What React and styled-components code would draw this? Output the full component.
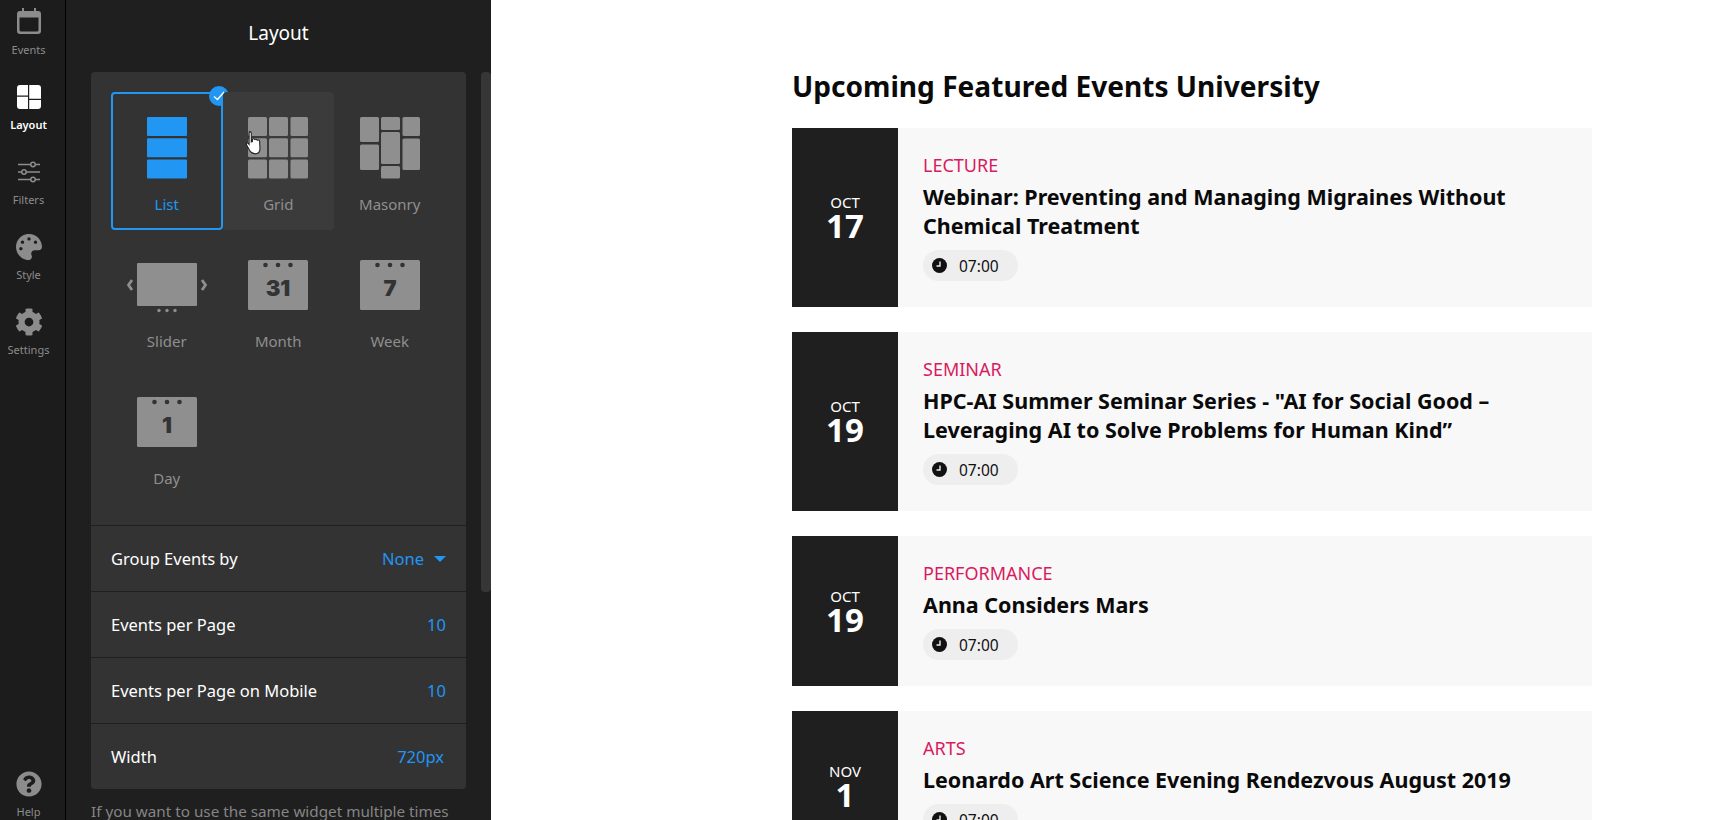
import React from "react";
import styled, { createGlobalStyle } from "styled-components";
import { FaCog, FaPalette, FaQuestionCircle } from "react-icons/fa";

const GlobalStyle = createGlobalStyle`
  html, body {
    margin: 0;
    height: 100%;
    overflow: hidden;
    background: #fff;
    font-family: "Noto Sans", "Open Sans", "Liberation Sans", sans-serif;
  }
  * { box-sizing: border-box; }
`;

const Page = styled.div`
  display: flex;
  width: 1718px;
  height: 820px;
  overflow: hidden;
`;

const Rail = styled.nav`
  width: 66px;
  height: 100%;
  flex-shrink: 0;
  display: flex;
  flex-direction: column;
  padding-right: 8px;
  background: #1c1c1c;
  border-right: 1px solid #000;
`;

const RailItem = styled.div`
  height: 75px;
  flex-shrink: 0;
  display: flex;
  flex-direction: column;
  align-items: center;
  padding-top: 9px;
  color: ${({ $active }) => ($active ? "#fff" : "#8c8c8c")};
  margin-top: ${({ $bottom }) => ($bottom ? "auto" : "0")};
  margin-bottom: ${({ $bottom }) => ($bottom ? "-17px" : "0")};
`;

const RailIcon = styled.div`
  height: 26px;
  display: flex;
  align-items: center;
  justify-content: center;
`;

const RailLabel = styled.span`
  margin-top: 6px;
  font-size: 11px;
  line-height: 18px;
  font-weight: ${({ $active }) => ($active ? 600 : 400)};
`;

const Panel = styled.aside`
  width: 425px;
  height: 100%;
  flex-shrink: 0;
  display: flex;
  flex-direction: column;
  background: #1f1f1f;
  position: relative;
  overflow: hidden;
`;

const PanelTitle = styled.h2`
  margin: 0;
  height: 72px;
  flex-shrink: 0;
  padding-top: 19px;
  font-size: 19px;
  line-height: 28px;
  font-weight: 400;
  color: #fff;
  text-align: center;
`;

const Card = styled.div`
  width: 375px;
  margin-left: 25px;
  flex-shrink: 0;
  border-radius: 4px;
  background: #333;
`;

const TileGrid = styled.div`
  display: grid;
  grid-template-columns: repeat(3, 111.5px);
  grid-auto-rows: 137px;
  padding: 20px 20px 22px;
`;

const Tile = styled.div`
  position: relative;
  height: 138px;
  display: flex;
  flex-direction: column;
  align-items: center;
  border-radius: 4px;
  border: 2px solid ${({ $selected }) => ($selected ? "#2196f3" : "transparent")};
  background: ${({ $hovered }) => ($hovered ? "#3b3b3b" : "transparent")};
  color: ${({ $selected }) => ($selected ? "#2196f3" : "#8f8f8f")};
`;

const TileIcon = styled.svg`
  display: block;
  flex-shrink: 0;
  margin-top: ${({ $top }) => $top}px;
  margin-bottom: ${({ $gap }) => $gap}px;
`;

const TileLabel = styled.span`
  font-size: 15px;
  line-height: 22px;
`;

const CheckBadge = styled.div`
  position: absolute;
  top: -8px;
  right: -8px;
  width: 20px;
  height: 20px;
  border-radius: 50%;
  background: #2196f3;
  display: flex;
  align-items: center;
  justify-content: center;
`;

const Pointer = styled.svg`
  position: absolute;
  left: 20px;
  top: 36px;
`;

const SettingRow = styled.div`
  height: 66px;
  padding: 0 20px;
  display: flex;
  align-items: center;
  justify-content: space-between;
  border-top: 1px solid #1f1f1f;
  font-size: 16.5px;
  color: #fff;
`;

const SettingValue = styled.span`
  display: flex;
  align-items: center;
  gap: 10px;
  padding-right: ${({ $inset }) => ($inset ? "2px" : "0")};
  color: #2196f3;
`;

const Caret = styled.i`
  width: 0;
  height: 0;
  border-left: 6px solid transparent;
  border-right: 6px solid transparent;
  border-top: 6px solid #2196f3;
`;

const Hint = styled.p`
  margin: 11px 0 0 25px;
  width: 375px;
  flex-shrink: 0;
  font-size: 15.25px;
  line-height: 22px;
  color: #858585;
`;

const ScrollThumb = styled.div`
  position: absolute;
  top: 72px;
  right: 0;
  width: 10px;
  height: 520px;
  border-radius: 4px;
  background: #363636;
`;

const Main = styled.main`
  flex: 1;
  padding: 65px 0 0 301px;
  background: #fff;
  overflow: hidden;
`;

const Heading = styled.h1`
  margin: 0 0 21px;
  font-size: 28.1px;
  line-height: 42px;
  font-weight: 700;
  color: #0a0a0a;
`;

const EventCard = styled.article`
  width: 800px;
  display: flex;
  margin-bottom: 25px;
  background: #f8f8f9;
`;

const DateCol = styled.div`
  width: 106px;
  flex-shrink: 0;
  display: flex;
  flex-direction: column;
  align-items: center;
  justify-content: center;
  background: #1f1f1f;
  color: #fff;
`;

const Month = styled.span`
  font-size: 15px;
  line-height: 18px;
  margin-top: -1px;
  text-transform: uppercase;
`;

const Day = styled.span`
  font-size: 33px;
  line-height: 30px;
  font-weight: 700;
`;

const Body = styled.div`
  padding: 25px 25px 26px;
`;

const Category = styled.div`
  margin-bottom: 5px;
  font-size: 18px;
  line-height: 24px;
  color: #d81b60;
  text-transform: uppercase;
`;

const EventTitle = styled.h3`
  margin: 0 0 10px;
  font-size: 21.5px;
  line-height: 29px;
  font-weight: 700;
  color: #0a0a0a;
`;

const TimePill = styled.div`
  width: 95px;
  height: 31px;
  padding-left: 9px;
  display: flex;
  align-items: center;
  gap: 12px;
  border-radius: 16px;
  background: #eee;
  font-size: 15.5px;
  color: #111;
`;

const EventsIcon = () => (
  <svg width="24" height="26" viewBox="0 0 24 26" fill="currentColor" style={{ marginTop: -2 }}>
    <path
      fillRule="evenodd"
      d="M5 0h2v3h10V0h2v3h2a3 3 0 0 1 3 3v17a3 3 0 0 1-3 3H3a3 3 0 0 1-3-3V6a3 3 0 0 1 3-3h2zM2.500 9.500V22a1.500 1.500 0 0 0 1.500 1.500h16a1.500 1.500 0 0 0 1.500-1.500V9.500z"
    />
  </svg>
);

const LayoutIcon = () => (
  <svg width="24" height="24" viewBox="0 0 24 24" fill="currentColor">
    <path d="M3 0h8v10.500H0V3a3 3 0 0 1 3-3zM12.200 0H21a3 3 0 0 1 3 3v10.800H12.200zM0 11.800h11V24H3a3 3 0 0 1-3-3zM12.200 15H24v6a3 3 0 0 1-3 3h-8.800z" />
  </svg>
);

const FiltersIcon = () => (
  <svg width="22" height="22" viewBox="0 0 22 22" fill="none" stroke="currentColor" strokeWidth="1.500">
    <path d="M0 3.500h12.800M17.200 3.500H22M0 11h3.800M8.200 11H22M0 18.500h12.800M17.200 18.500H22" />
    <circle cx="15" cy="3.500" r="2.200" />
    <circle cx="6" cy="11" r="2.200" />
    <circle cx="15" cy="18.500" r="2.200" />
  </svg>
);

const CalendarTile = ({ label }) => (
  <TileIcon $top={29} $gap={20} width="60" height="50" viewBox="0 0 60 50">
    <rect width="60" height="50" rx="1.500" fill="currentColor" />
    <circle cx="17.500" cy="5" r="2.300" fill="#333" />
    <circle cx="30" cy="5" r="2.300" fill="#333" />
    <circle cx="42.500" cy="5" r="2.300" fill="#333" />
    <text x="30" y="36" textAnchor="middle" fontFamily="Inter, 'Liberation Sans', sans-serif" fontSize="22" fontWeight="900" fill="#333">
      {label}
    </text>
  </TileIcon>
);

const ListTile = () => (
  <TileIcon $top={23} $gap={14} width="40" height="62" viewBox="0 0 40 62" fill="currentColor">
    <rect y="0" width="40" height="19" rx="1" />
    <rect y="21.300" width="40" height="19" rx="1" />
    <rect y="42.600" width="40" height="19" rx="1" />
  </TileIcon>
);

const gridCols = [
  { x: 0, w: 19 },
  { x: 21, w: 19 },
  { x: 42.5, w: 17.5 },
];

const GridTile = () => (
  <TileIcon $top={23} $gap={14} width="60" height="62" viewBox="0 0 60 62" fill="currentColor">
    {[0, 21.3, 42.6].map((y) =>
      gridCols.map((c) => (
        <rect key={`${c.x}-${y}`} x={c.x} y={y} width={c.w} height="19" rx="1.500" />
      ))
    )}
  </TileIcon>
);

const MasonryTile = () => (
  <TileIcon $top={23} $gap={14} width="60" height="62" viewBox="0 0 60 62" fill="currentColor">
    <rect x="0" y="0" width="19" height="25" rx="1.500" />
    <rect x="0" y="27.500" width="19" height="25.500" rx="1.500" />
    <rect x="21" y="0" width="19" height="13" rx="1.500" />
    <rect x="21" y="15" width="19" height="32" rx="1.500" />
    <rect x="21" y="49" width="19" height="12.500" rx="1.500" />
    <rect x="42.500" y="0" width="17.500" height="19" rx="1.500" />
    <rect x="42.500" y="21.500" width="17.500" height="31.500" rx="1.500" />
  </TileIcon>
);

const SliderTile = () => (
  <TileIcon $top={32} $gap={17} width="82" height="50" viewBox="0 0 82 50" fill="currentColor">
    <rect x="11" y="0" width="60" height="43" rx="1" />
    <path d="M6 17l-3.500 5 3.500 5M76 17l3.500 5-3.500 5" fill="none" stroke="currentColor" strokeWidth="2.800" />
    <circle cx="33" cy="47.500" r="1.700" />
    <circle cx="41" cy="47.500" r="1.700" />
    <circle cx="49" cy="47.500" r="1.700" />
  </TileIcon>
);

const tiles = [
  { label: "List", icon: <ListTile />, selected: true },
  { label: "Grid", icon: <GridTile />, hovered: true },
  { label: "Masonry", icon: <MasonryTile /> },
  { label: "Slider", icon: <SliderTile /> },
  { label: "Month", icon: <CalendarTile label="31" /> },
  { label: "Week", icon: <CalendarTile label="7" /> },
  { label: "Day", icon: <CalendarTile label="1" /> },
];

const settings = [
  { label: "Events per Page", value: "10" },
  { label: "Events per Page on Mobile", value: "10" },
  { label: "Width", value: "720px", inset: true },
];

const events = [
  { month: "Oct", day: "17", category: "Lecture", title: "Webinar: Preventing and Managing Migraines Without Chemical Treatment" },
  { month: "Oct", day: "19", category: "Seminar", title: "HPC-AI Summer Seminar Series - \"AI for Social Good – Leveraging AI to Solve Problems for Human Kind”" },
  { month: "Oct", day: "19", category: "Performance", title: "Anna Considers Mars" },
  { month: "Nov", day: "1", category: "Arts", title: "Leonardo Art Science Evening Rendezvous August 2019" },
];

const ClockIcon = () => (
  <svg width="15" height="15" viewBox="0 0 15 15">
    <circle cx="7.500" cy="7.500" r="7.500" fill="#111" />
    <path d="M8 3.500v4.500H4.500" fill="none" stroke="#eee" strokeWidth="1.400" />
  </svg>
);

const App = () => (
  <Page>
    <GlobalStyle />
    <Rail>
      <RailItem>
        <RailIcon><EventsIcon /></RailIcon>
        <RailLabel>Events</RailLabel>
      </RailItem>
      <RailItem $active>
        <RailIcon><LayoutIcon /></RailIcon>
        <RailLabel $active>Layout</RailLabel>
      </RailItem>
      <RailItem>
        <RailIcon><FiltersIcon /></RailIcon>
        <RailLabel>Filters</RailLabel>
      </RailItem>
      <RailItem>
        <RailIcon><FaPalette size={26} /></RailIcon>
        <RailLabel>Style</RailLabel>
      </RailItem>
      <RailItem>
        <RailIcon><FaCog size={28} /></RailIcon>
        <RailLabel>Settings</RailLabel>
      </RailItem>
      <RailItem $bottom>
        <RailIcon><FaQuestionCircle size={26} /></RailIcon>
        <RailLabel>Help</RailLabel>
      </RailItem>
    </Rail>
    <Panel>
      <PanelTitle>Layout</PanelTitle>
      <Card>
        <TileGrid>
          {tiles.map((t) => (
            <Tile key={t.label} $selected={t.selected} $hovered={t.hovered}>
              {t.icon}
              <TileLabel>{t.label}</TileLabel>
              {t.selected && (
                <CheckBadge>
                  <svg width="12" height="10" viewBox="0 0 12 10" fill="none" stroke="#fff" strokeWidth="1.300">
                    <path d="M1 5.500l3.500 3L11 1" />
                  </svg>
                </CheckBadge>
              )}
              {t.hovered && (
                <Pointer width="18" height="26" viewBox="0 0 16 24">
                  <path
                    d="M4 1.500c1 0 1.500.7 1.500 1.500v8l1-.3V8.500c1-.8 2-.5 2.300.3.800-.5 1.800-.3 2.200.6.900-.4 2-.1 2.200 1l.3 7c0 2.500-1.500 4.600-4.500 4.600-2.500 0-3.800-1-5-3L1 13.500c-.5-1 .6-2 1.700-1.200l.8 1V3c0-.8 0-1.500.5-1.500z"
                    fill="#fff"
                    stroke="#222"
                    strokeWidth="1"
                  />
                </Pointer>
              )}
            </Tile>
          ))}
        </TileGrid>
        <SettingRow>
          Group Events by
          <SettingValue>None <Caret /></SettingValue>
        </SettingRow>
        {settings.map((s) => (
          <SettingRow key={s.label}>
            {s.label}
            <SettingValue $inset={s.inset}>{s.value}</SettingValue>
          </SettingRow>
        ))}
      </Card>
      <Hint>If you want to use the same widget multiple times</Hint>
      <ScrollThumb />
    </Panel>
    <Main>
      <Heading>Upcoming Featured Events University</Heading>
      {events.map((e, i) => (
        <EventCard key={i}>
          <DateCol>
            <Month>{e.month}</Month>
            <Day>{e.day}</Day>
          </DateCol>
          <Body>
            <Category>{e.category}</Category>
            <EventTitle>{e.title}</EventTitle>
            <TimePill>
              <ClockIcon />
              07:00
            </TimePill>
          </Body>
        </EventCard>
      ))}
    </Main>
  </Page>
);

export default App;
